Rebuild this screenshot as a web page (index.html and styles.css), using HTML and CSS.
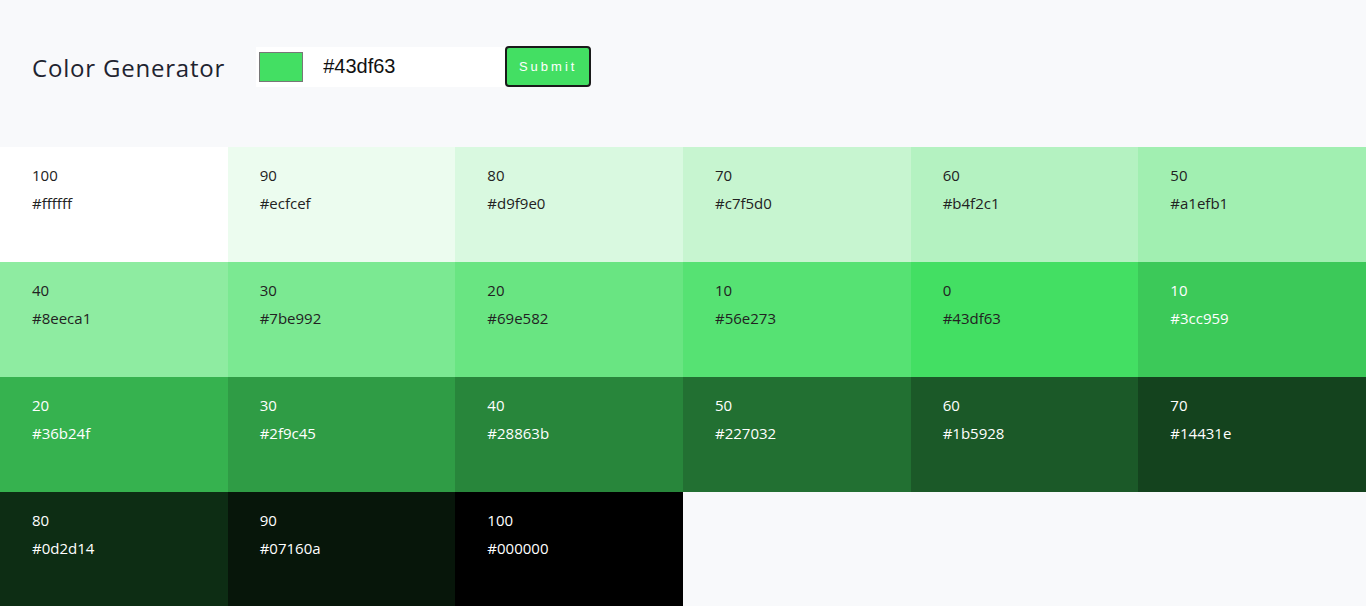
FILE: index.html
```html
<!DOCTYPE html>
<html lang="en">
<head>
  <meta charset="UTF-8">
  <meta name="viewport" content="width=device-width, initial-scale=1.0">
  <title>Color Generator</title>
  <link rel="stylesheet" href="styles.css">
</head>
<body>
  <section class="container">
    <h3>Color Generator</h3>
    <form class="color-form">
      <input type="color" class="color-pick" value="#43df63">
      <input type="text" class="color-text" value="#43df63">
      <button type="submit" class="btn">Submit</button>
    </form>
  </section>

  <section class="colors">
    <article class="color"><p class="percent">100</p><p class="hex">#ffffff</p></article>
    <article class="color"><p class="percent">90</p><p class="hex">#ecfcef</p></article>
    <article class="color"><p class="percent">80</p><p class="hex">#d9f9e0</p></article>
    <article class="color"><p class="percent">70</p><p class="hex">#c7f5d0</p></article>
    <article class="color"><p class="percent">60</p><p class="hex">#b4f2c1</p></article>
    <article class="color"><p class="percent">50</p><p class="hex">#a1efb1</p></article>
    <article class="color"><p class="percent">40</p><p class="hex">#8eeca1</p></article>
    <article class="color"><p class="percent">30</p><p class="hex">#7be992</p></article>
    <article class="color"><p class="percent">20</p><p class="hex">#69e582</p></article>
    <article class="color"><p class="percent">10</p><p class="hex">#56e273</p></article>
    <article class="color"><p class="percent">0</p><p class="hex">#43df63</p></article>
    <article class="color color-light"><p class="percent">10</p><p class="hex">#3cc959</p></article>
    <article class="color color-light"><p class="percent">20</p><p class="hex">#36b24f</p></article>
    <article class="color color-light"><p class="percent">30</p><p class="hex">#2f9c45</p></article>
    <article class="color color-light"><p class="percent">40</p><p class="hex">#28863b</p></article>
    <article class="color color-light"><p class="percent">50</p><p class="hex">#227032</p></article>
    <article class="color color-light"><p class="percent">60</p><p class="hex">#1b5928</p></article>
    <article class="color color-light"><p class="percent">70</p><p class="hex">#14431e</p></article>
    <article class="color color-light"><p class="percent">80</p><p class="hex">#0d2d14</p></article>
    <article class="color color-light"><p class="percent">90</p><p class="hex">#07160a</p></article>
    <article class="color color-light"><p class="percent">100</p><p class="hex">#000000</p></article>
  </section>

  <script>
    document.querySelectorAll('.color').forEach((el) => {
      el.style.background = el.querySelector('.hex').textContent;
    });
  </script>
</body>
</html>
```

FILE: styles.css
```css
* {
  margin: 0;
  padding: 0;
  box-sizing: border-box;
}

body {
  background: #f8f9fb;
  font-family: 'Open Sans', 'Noto Sans', sans-serif;
  color: #222;
}

.container {
  display: flex;
  align-items: center;
  gap: 31px;
  padding: 46px 32px 60px;
}

h3 {
  font-size: 24px;
  font-weight: 400;
  letter-spacing: 0.8px;
  color: #1f2430;
  padding-top: 2px;
}

.color-form {
  display: flex;
  align-items: center;
}

.color-pick {
  width: 47px;
  height: 40px;
  border: none;
  background: #fff;
  padding: 5px 0 5px 3px;
  cursor: pointer;
}

.color-pick::-webkit-color-swatch-wrapper {
  padding: 0;
}

.color-pick::-webkit-color-swatch {
  border: 1px solid #777;
  border-radius: 0;
}

.color-text {
  width: 202px;
  height: 40px;
  border: none;
  outline: none;
  background: #fff;
  padding: 0 20px;
  font-family: 'Liberation Sans', Arial, sans-serif;
  font-size: 20px;
  color: #111;
}

.btn {
  width: 86px;
  height: 41px;
  background: #43df63;
  border: 2px solid #1a1a1a;
  border-radius: 4px;
  color: #fff;
  font-family: 'Liberation Sans', Arial, sans-serif;
  font-size: 13px;
  letter-spacing: 3px;
  cursor: pointer;
}

.colors {
  display: grid;
  grid-template-columns: repeat(6, 1fr);
  grid-auto-rows: 115px;
}

.color {
  padding: 14px 32px;
  font-size: 15px;
  line-height: 28px;
  color: #222;
}

.color-light {
  color: #fff;
}
```
